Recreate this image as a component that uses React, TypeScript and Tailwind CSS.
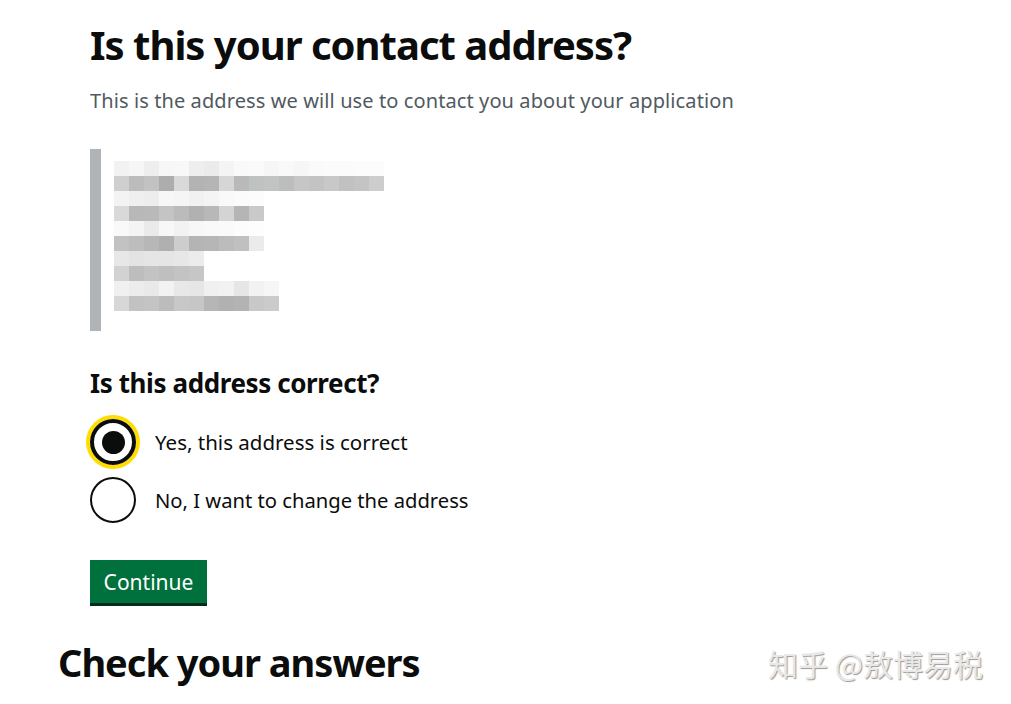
const rows: { main: string[]; faint: string[] }[] = [
  {
    faint: ["bg-[#f2f2f2]", "bg-[#f6f6f6]", "bg-[#eeeeee]", "bg-[#f7f7f7]", "bg-[#f8f8f8]", "bg-[#eeeeee]", "bg-[#ebebeb]", "bg-[#f4f4f4]", "bg-[#f9f9f9]", "bg-[#fafafa]", "bg-[#f6f6f6]", "bg-[#f9f9f9]", "bg-[#f6f6f6]", "bg-[#fafafa]", "bg-[#fbfbfb]", "bg-[#fbfbfb]", "bg-[#fcfcfc]", "bg-[#fcfcfc]"],
    main: ["bg-[#cfcfcf]", "bg-[#bcbcbc]", "bg-[#c2c2c2]", "bg-[#adadad]", "bg-[#d9d9d9]", "bg-[#b3b3b3]", "bg-[#b5b5b5]", "bg-[#d6d6d6]", "bg-[#b9b9b9]", "bg-[#bfc2c2]", "bg-[#c2c4c4]", "bg-[#bcbdbd]", "bg-[#c6c6c6]", "bg-[#c3c3c3]", "bg-[#c8c8c8]", "bg-[#c1c1c1]", "bg-[#c4c4c4]", "bg-[#cdcdcd]"],
  },
  {
    faint: ["bg-[#f3f3f3]", "bg-[#efefef]", "bg-[#ededed]", "bg-[#f7f7f7]", "bg-[#f5f5f5]", "bg-[#f1f1f1]", "bg-[#f4f4f4]", "bg-[#f9f9f9]", "bg-[#fbfbfb]", "bg-[#fcfcfc]"],
    main: ["bg-[#d9d9d9]", "bg-[#b8b8b8]", "bg-[#b9b9b9]", "bg-[#c4c4c4]", "bg-[#bbbbbb]", "bg-[#b1b1b1]", "bg-[#b8b8b8]", "bg-[#d4d4d4]", "bg-[#b5b5b5]", "bg-[#c9c9c9]"],
  },
  {
    faint: ["bg-[#f9f9f9]", "bg-[#f4f4f4]", "bg-[#eaeaea]", "bg-[#f7f7f7]", "bg-[#f2f2f2]", "bg-[#f7f7f7]", "bg-[#f9f9f9]", "bg-[#fafafa]", "bg-[#fcfcfc]", "bg-[#fdfdfd]"],
    main: ["bg-[#c2c2c2]", "bg-[#bdbdbd]", "bg-[#b7b7b7]", "bg-[#b0b0b0]", "bg-[#cdcdcd]", "bg-[#b4b4b4]", "bg-[#b6b6b6]", "bg-[#bcbcbc]", "bg-[#c0c0c0]", "bg-[#ebebeb]"],
  },
  {
    faint: ["bg-[#e7e7e7]", "bg-[#e3e3e3]", "bg-[#e5e5e5]", "bg-[#e5e5e5]", "bg-[#e7e7e7]", "bg-[#ececec]"],
    main: ["bg-[#d2d2d2]", "bg-[#bdbdbd]", "bg-[#c3c3c3]", "bg-[#bfbfbf]", "bg-[#c3c3c3]", "bg-[#c6c6c6]"],
  },
  {
    faint: ["bg-[#f0f0f0]", "bg-[#ececec]", "bg-[#e9e9e9]", "bg-[#f2f2f2]", "bg-[#e8e8e8]", "bg-[#e6e6e6]", "bg-[#f0f0f0]", "bg-[#f2f2f2]", "bg-[#e6e6e6]", "bg-[#f2f2f2]", "bg-[#f6f6f6]"],
    main: ["bg-[#d7d7d7]", "bg-[#c2c2c2]", "bg-[#c4c4c4]", "bg-[#bcbcbc]", "bg-[#c8c8c8]", "bg-[#c6c6c6]", "bg-[#b6b6b6]", "bg-[#b1b1b1]", "bg-[#b3b3b3]", "bg-[#c8c8c8]", "bg-[#cbcbcb]"],
  },
];

const font = { fontFamily: '"Noto Sans", "Open Sans", Arial, sans-serif' };

export default function App() {
  return (
    <div className="w-[1011px] h-[704px] bg-white overflow-hidden relative text-[#0b0c0c]" style={font}>
      <div className="pl-[90px] pt-[18px]">
        <h1 className="text-[40px] leading-[54px] font-bold tracking-[-1px]">Is this your contact address?</h1>
        <p className="mt-[15px] text-[20px] leading-[28px] tracking-[0.1px] text-[#505a5f]">
          This is the address we will use to contact you about your application
        </p>

        <div className="mt-[34px] flex">
          <div className="w-[11px] h-[182px] bg-[#b1b4b6]" />
          <div className="relative pl-[13px] pt-[12px] flex flex-col blur-[0.6px]">
            {rows.map((r, i) => (
              <div key={i} className="flex flex-col">
                <div className="flex h-[15px]">
                  {r.faint.map((c, j) => (
                    <div key={j} className={`w-[15px] h-[15px] ${c}`} />
                  ))}
                </div>
                <div className="flex h-[15px]">
                  {r.main.map((c, j) => (
                    <div key={j} className={`w-[15px] h-[15px] ${c}`} />
                  ))}
                </div>
              </div>
            ))}
          </div>
        </div>

        <h2 className="mt-[35px] text-[26px] leading-[34px] font-bold tracking-[-0.4px]">Is this address correct?</h2>

        <div className="mt-[19px] flex flex-col gap-[12px]">
          <div className="flex items-center">
            <div className="w-[46px] h-[46px] rounded-full border-[4px] border-[#0b0c0c] ring-[4px] ring-[#ffdd00] flex items-center justify-center">
              <div className="w-[23px] h-[23px] rounded-full bg-[#0b0c0c]" />
            </div>
            <span className="ml-[19px] text-[20.5px] leading-[28px]">Yes, this address is correct</span>
          </div>
          <div className="flex items-center">
            <div className="w-[46px] h-[46px] rounded-full border-[2px] border-[#0b0c0c]" />
            <span className="ml-[19px] text-[20.2px] leading-[28px]">No, I want to change the address</span>
          </div>
        </div>

        <button className="mt-[37px] w-[117px] h-[43px] bg-[#00703c] text-white text-[21px] leading-[28px] shadow-[0_3px_0_#002d18] flex items-center justify-center">
          Continue
        </button>
      </div>

      <h1 className="absolute left-[58px] top-[636px] text-[38px] leading-[52px] font-bold tracking-[-1px]">
        Check your answers
      </h1>

      <div
        className="absolute left-[768px] top-[643px] text-[30px] leading-[40px] text-[#e8e8e8] [text-shadow:1px_1px_1px_#9a9a9a]"
        style={{ fontFamily: '"Noto Sans CJK SC", "Noto Sans", sans-serif' }}
      >
        知乎 @敖博易税
      </div>
    </div>
  );
}
